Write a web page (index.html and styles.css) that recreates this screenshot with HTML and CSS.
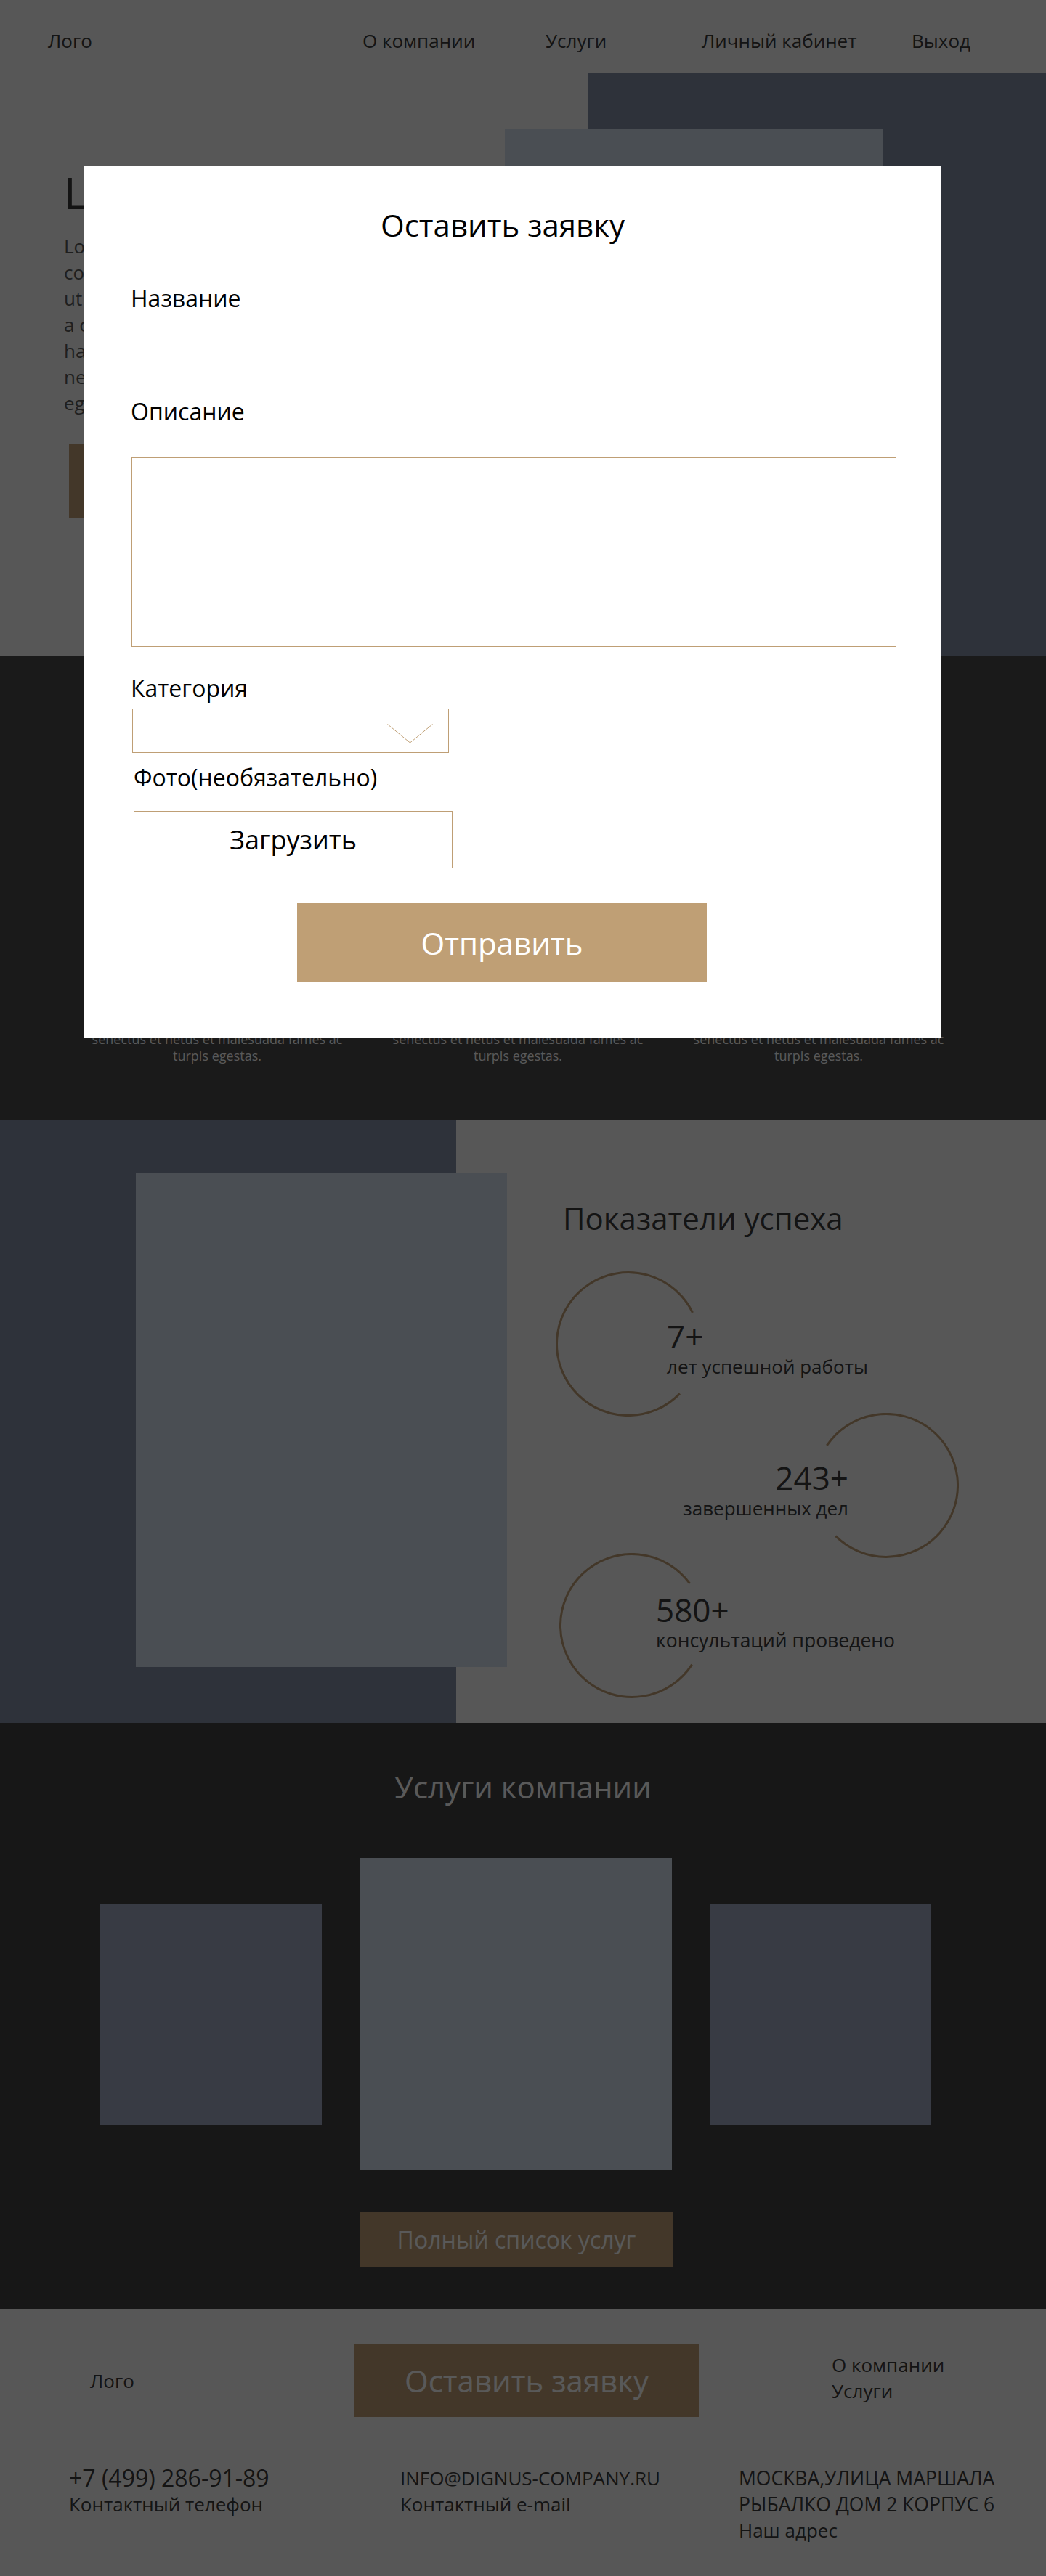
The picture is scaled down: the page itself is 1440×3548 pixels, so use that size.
FILE: index.html
```html
<!DOCTYPE html>
<html lang="ru">
<head>
<meta charset="utf-8">
<title>Оставить заявку</title>
<link rel="stylesheet" href="styles.css">
</head>
<body>
<div class="page">
  <section class="hero">
    <header class="header">
      <a class="logo">Лого</a>
      <a class="nav-link">О компании</a>
      <a class="nav-link">Услуги</a>
      <a class="nav-link">Личный кабинет</a>
      <a class="nav-link">Выход</a>
    </header>
    <div class="hero-body">
      <div class="hero-text">
        <h1 class="hero-title">Lorem ipsum dolor</h1>
        <p class="hero-lead">Lorem ipsum dolor sit amet,<br>consectetur adipiscing elit,<br>ut aliquam, purus sit amet<br>a commodo nulla facilisi<br>habitant morbi tristique<br>netus et malesuada fames<br>egestas.</p>
        <a class="btn-gold hero-btn">Оставить заявку</a>
      </div>
      <div class="hero-visual"><div class="hero-photo"></div></div>
    </div>
  </section>

  <section class="features">
    <p class="feature-text">Pellentesque habitant morbi tristique<br>senectus et netus et malesuada fames ac<br>turpis egestas.</p>
    <p class="feature-text">Pellentesque habitant morbi tristique<br>senectus et netus et malesuada fames ac<br>turpis egestas.</p>
    <p class="feature-text">Pellentesque habitant morbi tristique<br>senectus et netus et malesuada fames ac<br>turpis egestas.</p>
  </section>

  <section class="stats">
    <div class="stats-photo"></div>
    <div class="stats-content">
      <h2 class="stats-title">Показатели успеха</h2>
      <div class="stat stat-1">
        <svg class="stat-ring" viewBox="0 0 200 200" width="200" height="200"><path d="M170.9 168.4 A98.5 98.5 0 1 1 188.5 56.8"/></svg>
        <div class="stat-text"><div class="stat-num">7+</div><div class="stat-label">лет успешной работы</div></div>
      </div>
      <div class="stat stat-2">
        <svg class="stat-ring" viewBox="0 0 200 200" width="200" height="200"><path d="M18.3 44.9 A98.5 98.5 0 1 1 30.4 169.6"/></svg>
        <div class="stat-text"><div class="stat-num">243+</div><div class="stat-label">завершенных дел</div></div>
      </div>
      <div class="stat stat-3">
        <svg class="stat-ring" viewBox="0 0 200 200" width="200" height="200"><path d="M182.6 153.6 A98.5 98.5 0 1 1 179.7 42.1"/></svg>
        <div class="stat-text"><div class="stat-num">580+</div><div class="stat-label">консультаций проведено</div></div>
      </div>
    </div>
  </section>

  <section class="services">
    <h2 class="services-title">Услуги компании</h2>
    <div class="services-cards">
      <div class="card-side"></div>
      <div class="card-main"></div>
      <div class="card-side"></div>
    </div>
    <a class="btn-gold services-btn">Полный список услуг</a>
  </section>

  <footer class="footer">
    <div class="footer-top">
      <a class="footer-logo">Лого</a>
      <a class="btn-gold footer-btn">Оставить заявку</a>
      <nav class="footer-links">
        <a class="footer-link">О компании</a>
        <a class="footer-link">Услуги</a>
      </nav>
    </div>
    <div class="footer-bottom">
      <div class="contact">
        <div class="contact-phone">+7 (499) 286-91-89</div>
        <div class="contact-label">Контактный телефон</div>
      </div>
      <div class="contact">
        <div class="contact-mail">INFO@DIGNUS-COMPANY.RU</div>
        <div class="contact-label">Контактный e-mail</div>
      </div>
      <div class="contact">
        <div class="contact-address">МОСКВА,УЛИЦА МАРШАЛА<br>РЫБАЛКО ДОМ 2 КОРПУС 6</div>
        <div class="contact-label">Наш адрес</div>
      </div>
    </div>
  </footer>
</div>

<div class="overlay">
  <form class="modal">
    <h2 class="modal-title">Оставить заявку</h2>
    <label class="field-label label-name" for="f-name">Название</label>
    <input class="field-line" id="f-name" type="text">
    <label class="field-label label-desc" for="f-desc">Описание</label>
    <textarea class="field-area" id="f-desc"></textarea>
    <label class="field-label label-cat">Категория</label>
    <div class="field-select">
      <svg class="chevron" viewBox="0 0 63 27" width="63" height="27"><polyline points="0.5,0.5 31.5,26 62.5,0.5"/></svg>
    </div>
    <label class="field-label label-photo">Фото(необязательно)</label>
    <button class="upload-btn" type="button">Загрузить</button>
    <button class="submit-btn" type="button">Отправить</button>
  </form>
</div>
</body>
</html>
```

FILE: styles.css
```css
* { box-sizing: border-box; }
html, body { margin: 0; padding: 0; }
body {
  position: relative;
  width: 1440px;
  font-family: "Open Sans", "Noto Sans", sans-serif;
  color: #3a3a3a;
  background: #f9f9f9;
}
a { color: inherit; text-decoration: none; }

/* hero */
.hero { height: 903px; background: #f9f9f9; }
.header {
  height: 101px;
  padding: 38px 0 0 66px;
  display: grid;
  grid-template-columns: 433px 252px 215px 289px auto;
  font-size: 26px;
  line-height: 36px;
}
.hero-body { display: grid; grid-template-columns: 695px 745px; height: 802px; }
.hero-text { padding: 128px 0 0 88px; }
.hero-title { margin: 0; font-size: 60px; line-height: 72px; font-weight: 400; white-space: nowrap; }
.hero-lead { margin: 20px 0 0; font-size: 26px; line-height: 36px; color: #5a5a5a; white-space: nowrap; }
.btn-gold {
  display: flex;
  align-items: center;
  justify-content: center;
  background: #bf9f75;
  color: #fff;
}
.hero-btn { margin: 38px 0 0 7px; width: 474px; height: 102px; font-size: 32px; }
.hero-visual {
  background: linear-gradient(to right, transparent 114px, #838fa6 114px);
  padding-top: 76px;
}
.hero-photo { width: 521px; height: 620px; background: #d3dfed; }

/* features */
.features {
  height: 640px;
  background: #4a4a4a;
  display: grid;
  grid-template-columns: repeat(3, 380px);
  column-gap: 34px;
  align-content: end;
  padding: 0 0 77px 109px;
}
.feature-text {
  margin: 0;
  font-size: 18px;
  line-height: 23px;
  color: #fff;
  text-align: center;
  white-space: nowrap;
}

/* stats */
.stats {
  height: 830px;
  display: flex;
  background: linear-gradient(to right, #838fa6 628px, #f9f9f9 628px);
}
.stats-photo { flex: none; margin: 72px 0 0 187px; width: 511px; height: 681px; background: #d3dfed; }
.stats-content { margin-left: 67px; padding-top: 111px; }
.stats-title { margin: 0 0 49px 10px; font-size: 42px; line-height: 48px; font-weight: 400; white-space: nowrap; }
.stat { display: grid; height: 195px; }
.stat-2 { height: 193px; }
.stat > * { grid-area: 1 / 1; }
.stat-ring { display: block; width: 200px; height: 200px; }
.stat-ring path { fill: none; stroke: #bf9f75; stroke-width: 3; }
.stat-num { font-size: 44px; line-height: 48px; white-space: nowrap; }
.stat-label { font-size: 26px; line-height: 36px; white-space: nowrap; }
.stat-1 .stat-text { margin: 65px 0 0 153px; }
.stat-2 .stat-ring { margin-left: 355px; }
.stat-2 .stat-text { margin-top: 65px; width: 403px; text-align: right; }
.stat-3 .stat-ring { margin-left: 5px; }
.stat-3 .stat-text { margin: 54px 0 0 138px; }
.stat-3 .stat-label { font-size: 26.5px; }

/* services */
.services { height: 807px; background: #424242; padding-top: 63px; }
.services-title { margin: 0; text-align: center; font-size: 42px; line-height: 50px; font-weight: 400; color: #fff; }
.services-cards {
  display: flex;
  justify-content: center;
  align-items: center;
  gap: 52px;
  margin-top: 73px;
  padding-right: 20px;
}
.card-side { width: 305px; height: 305px; background: #a0a9c2; }
.card-main { width: 430px; height: 430px; background: #d3dfed; }
.services-btn { margin: 58px 0 0 496px; width: 430px; height: 75px; font-size: 32px; }

/* footer */
.footer { height: 368px; background: #f9f9f9; padding-top: 48px; }
.footer-top {
  display: grid;
  grid-template-columns: 364px 474px 1fr;
  align-items: center;
  padding-left: 124px;
}
.footer-logo { font-size: 26px; line-height: 36px; }
.footer-btn { height: 101px; font-size: 42px; }
.footer-links { display: flex; flex-direction: column; align-self: start; margin-top: 11px; padding-left: 183px; }
.footer-link { font-size: 26px; line-height: 36px; }
.footer-bottom {
  display: grid;
  grid-template-columns: 456px 466px 1fr;
  padding-left: 95px;
  margin-top: 66px;
}
.contact-phone { font-size: 32px; line-height: 36px; }
.contact-mail { font-size: 26px; line-height: 36px; }
.contact-address { font-size: 26.5px; line-height: 36px; }
.contact-label { font-size: 26px; line-height: 36px; }

/* modal */
.overlay { position: absolute; inset: 0; background: rgba(0, 0, 0, 0.65); }
.modal {
  position: absolute;
  top: 228px;
  left: 116px;
  width: 1180px;
  padding: 57px 56px 77px 64px;
  background: #fff;
  color: #000;
}
.modal-title { margin: 0; width: 1024px; text-align: center; font-size: 42px; line-height: 50px; font-weight: 400; }
.field-label { display: block; font-size: 32px; line-height: 36px; }
.label-name { margin-top: 58px; }
.field-line {
  display: block;
  width: 1060px;
  height: 70px;
  margin: 0;
  padding: 0;
  border: 0;
  border-bottom: 1px solid #bf9f75;
  background: transparent;
  font: inherit;
  outline: none;
}
.label-desc { margin-top: 50px; }
.field-area {
  display: block;
  width: 1053px;
  height: 261px;
  margin: 45px 0 0 1px;
  padding: 0;
  border: 1px solid #bf9f75;
  resize: none;
  font: inherit;
  outline: none;
}
.label-cat { margin-top: 39px; }
.field-select {
  display: flex;
  justify-content: flex-end;
  align-items: flex-start;
  width: 436px;
  height: 61px;
  margin: 10px 0 0 2px;
  padding: 20px 21px 0 0;
  border: 1px solid #bf9f75;
}
.chevron { display: block; }
.chevron polyline { fill: none; stroke: #bf9f75; stroke-width: 1; }
.label-photo { margin: 16px 0 0 4px; }
.upload-btn {
  display: block;
  width: 439px;
  height: 79px;
  margin: 28px 0 0 4px;
  padding: 0;
  border: 1px solid #bf9f75;
  background: #fff;
  color: #000;
  font-family: inherit;
  font-size: 36px;
}
.submit-btn {
  display: block;
  width: 564px;
  height: 108px;
  margin: 48px 0 0 229px;
  padding: 0;
  border: 0;
  background: #bf9f75;
  color: #fff;
  font-family: inherit;
  font-size: 42px;
}
```
